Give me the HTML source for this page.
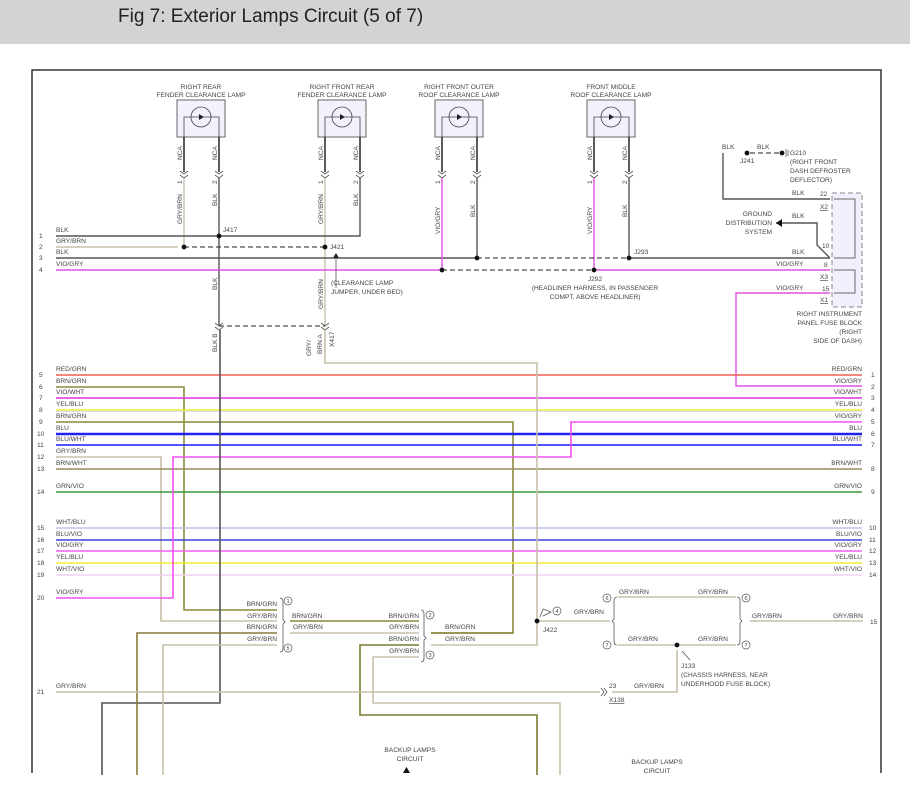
<!DOCTYPE html>
<html><head><meta charset="utf-8"><style>
html,body{margin:0;padding:0;background:#fff;width:910px;height:802px;overflow:hidden}
#hdr{position:absolute;left:0;top:0;width:910px;height:44px;background:#d3d3d3}
#hdr span{position:absolute;left:118px;top:6px;font:19px "Liberation Sans",sans-serif;color:#222}
svg{position:absolute;left:0;top:0}
text{font-family:"Liberation Sans",sans-serif;font-size:6.6px;fill:#444}
</style></head><body>
<div id="hdr"><span>Fig 7: Exterior Lamps Circuit (5 of 7)</span></div>
<svg width="910" height="802" viewBox="0 0 910 802">
<path d="M32 773V70H881V773" fill="none" stroke="#333" stroke-width="1.5"/>

<g fill="#f2f2fc" stroke="#666" stroke-width="1">
<rect x="177" y="100" width="48" height="37"/><rect x="318" y="100" width="48" height="37"/>
<rect x="435" y="100" width="48" height="37"/><rect x="587" y="100" width="48" height="37"/>
</g>
<g fill="none" stroke="#444" stroke-width="0.8">
<circle cx="201" cy="117" r="10"/><circle cx="342" cy="117" r="10"/><circle cx="459" cy="117" r="10"/><circle cx="611" cy="117" r="10"/>
<path d="M184 137V117H219V137M325 137V117H360V137M442 137V117H477V137M594 137V117H629V137"/>
</g>
<g fill="#222"><path d="M199 114l5 3-5 3zM340 114l5 3-5 3zM457 114l5 3-5 3zM609 114l5 3-5 3z"/></g>
<g text-anchor="middle">
<text x="201" y="89">RIGHT REAR</text><text x="201" y="97">FENDER CLEARANCE LAMP</text>
<text x="342" y="89">RIGHT FRONT REAR</text><text x="342" y="97">FENDER CLEARANCE LAMP</text>
<text x="459" y="89">RIGHT FRONT OUTER</text><text x="459" y="97">ROOF CLEARANCE LAMP</text>
<text x="611" y="89">FRONT MIDDLE</text><text x="611" y="97">ROOF CLEARANCE LAMP</text>
</g>
<g stroke="#333" stroke-width="1.6" fill="none">
<path d="M184 137V172M219 137V172M325 137V172M360 137V172M442 137V172M477 137V172M594 137V172M629 137V172"/>
</g>
<g stroke="#555" stroke-width="0.8" fill="none">
<path d="M180 171l4 3 4-3M180 175l4 3 4-3M215 171l4 3 4-3M215 175l4 3 4-3M321 171l4 3 4-3M321 175l4 3 4-3M356 171l4 3 4-3M356 175l4 3 4-3M438 171l4 3 4-3M438 175l4 3 4-3M473 171l4 3 4-3M473 175l4 3 4-3M590 171l4 3 4-3M590 175l4 3 4-3M625 171l4 3 4-3M625 175l4 3 4-3"/>
</g>
<g>
<text transform="translate(182,160) rotate(-90)">NCA</text><text transform="translate(217,160) rotate(-90)">NCA</text>
<text transform="translate(323,160) rotate(-90)">NCA</text><text transform="translate(358,160) rotate(-90)">NCA</text>
<text transform="translate(440,160) rotate(-90)">NCA</text><text transform="translate(475,160) rotate(-90)">NCA</text>
<text transform="translate(592,160) rotate(-90)">NCA</text><text transform="translate(627,160) rotate(-90)">NCA</text>
<text transform="translate(182,184) rotate(-90)">1</text><text transform="translate(217,184) rotate(-90)">2</text>
<text transform="translate(323,184) rotate(-90)">1</text><text transform="translate(358,184) rotate(-90)">2</text>
<text transform="translate(440,184) rotate(-90)">1</text><text transform="translate(475,184) rotate(-90)">2</text>
<text transform="translate(592,184) rotate(-90)">1</text><text transform="translate(627,184) rotate(-90)">2</text>
<text transform="translate(182,224) rotate(-90)">GRY/BRN</text><text transform="translate(217,206) rotate(-90)">BLK</text>
<text transform="translate(323,224) rotate(-90)">GRY/BRN</text><text transform="translate(358,206) rotate(-90)">BLK</text>
<text transform="translate(440,234) rotate(-90)">VIO/GRY</text><text transform="translate(475,217) rotate(-90)">BLK</text>
<text transform="translate(592,234) rotate(-90)">VIO/GRY</text><text transform="translate(627,217) rotate(-90)">BLK</text>
<text transform="translate(217,290) rotate(-90)">BLK</text><text transform="translate(323,309) rotate(-90)">GRY/BRN</text>
<text transform="translate(217,352) rotate(-90)">BLK B</text>
<text transform="translate(311,356) rotate(-90)">GRY/</text><text transform="translate(322,354) rotate(-90)">BRN  A</text>
<text transform="translate(334,347) rotate(-90)">X417</text>
</g>

<g fill="none" stroke-width="1.4">
<path d="M184 178V247M325 178V326M56 247H178" stroke="#c8c0a8"/>
<path d="M219 178V326M56 236H360V178M56 258H477V178M629 178V258H830M723 153V199H830" stroke="#555"/>
<path d="M442 178V270M594 178V270M56 270H442M594 270H830M830 293H736V386H862" stroke="#e050e0"/>
</g>
<g fill="none" stroke="#222" stroke-width="1.1" stroke-dasharray="5,3">
<path d="M184 247H325M477 258H629M442 270H594M219 326H325M750 153H782"/>
</g>
<g fill="#111"><circle cx="184" cy="247" r="2.4"/><circle cx="219" cy="236" r="2.4"/><circle cx="325" cy="247" r="2.4"/><circle cx="477" cy="258" r="2.4"/><circle cx="442" cy="270" r="2.4"/><circle cx="594" cy="270" r="2.4"/><circle cx="629" cy="258" r="2.4"/><circle cx="747" cy="153" r="2.4"/><circle cx="782" cy="153" r="2.4"/></g>
<g stroke="#555" stroke-width="0.8" fill="none">
<path d="M215 323l4 3 4-3M215 327l4 3 4-3M321 323l4 3 4-3M321 327l4 3 4-3M786 149V157M788 150V156"/>
<path d="M336 288V256" /></g>
<path d="M333 258l3-5 3 5z" fill="#222"/>
<text x="223" y="232">J417</text><text x="330" y="249">J421</text>
<text x="331" y="285">(CLEARANCE LAMP</text><text x="331" y="294">JUMPER, UNDER BED)</text>
<text x="634" y="254">J293</text>
<g text-anchor="middle"><text x="595" y="281">J292</text><text x="595" y="290">(HEADLINER HARNESS, IN PASSENGER</text><text x="595" y="299">COMPT, ABOVE HEADLINER)</text></g>

<text x="722" y="149">BLK</text><text x="757" y="149">BLK</text><text x="740" y="163">J241</text>
<text x="790" y="155">G210</text><text x="790" y="164">(RIGHT FRONT</text><text x="790" y="173">DASH DEFROSTER</text><text x="790" y="182">DEFLECTOR)</text>
<rect x="832" y="193" width="30" height="114" fill="#f0f0fc" stroke="#888" stroke-dasharray="5,3"/>
<path d="M834 199H855V258H834M834 270H855V293H834" fill="none" stroke="#666" stroke-width="1"/>
<path d="M776 223H817V245L830 258" fill="none" stroke="#555" stroke-width="1.4"/>
<path d="M776 223l6-4v8z" fill="#111"/>
<g text-anchor="end"><text x="772" y="216">GROUND</text><text x="772" y="225">DISTRIBUTION</text><text x="772" y="234">SYSTEM</text>
<text x="862" y="316">RIGHT INSTRUMENT</text><text x="862" y="325">PANEL FUSE BLOCK</text><text x="862" y="334">(RIGHT</text><text x="862" y="343">SIDE OF DASH)</text></g>
<text x="792" y="195">BLK</text><text x="820" y="196">22</text><text x="820" y="209" text-decoration="underline">X2</text>
<text x="792" y="218">BLK</text><text x="822" y="248">10</text><text x="792" y="254">BLK</text>
<text x="776" y="266">VIO/GRY</text><text x="824" y="267">8</text><text x="820" y="279" text-decoration="underline">X3</text>
<text x="776" y="290">VIO/GRY</text><text x="822" y="291">15</text><text x="820" y="302" text-decoration="underline">X1</text>

<g fill="none" stroke-width="1.6">
<path d="M56 375H862" stroke="#f06050"/>
<path d="M56 387H184V610H277" stroke="#8a8a3a"/>
<path d="M56 398H862" stroke="#e030e0"/>
<path d="M56 410H862" stroke="#eeee30"/><path d="M56 411.5H862" stroke="#c8c8f0" stroke-width="0.8"/>
<path d="M56 422H513V633H431" stroke="#8a8a3a"/>
<path d="M56 434H862" stroke="#2020f0" stroke-width="2.4"/>
<path d="M56 445H862" stroke="#1a1aff"/>
<path d="M56 457H161V621H277" stroke="#c8c0a8"/>
<path d="M56 469H862" stroke="#9a8a60"/>
<path d="M56 492H862" stroke="#3a9a3a"/>
<path d="M56 528H862" stroke="#c0c0ec"/>
<path d="M56 540H862" stroke="#4040e0"/>
<path d="M56 551H862" stroke="#f060f0"/>
<path d="M56 563H862" stroke="#eeee30"/>
<path d="M56 575H862" stroke="#f0d0f0"/>
<path d="M56 598H173V457H571V422H862" stroke="#f050f0"/>
<path d="M325 330V363H537V645H431" stroke="#c8c0a8"/>
<path d="M220 330V703H102V775" stroke="#555"/>
<path d="M277 633H137V775" stroke="#8a7a3a"/>
<path d="M277 645H163V775" stroke="#c8c0a8"/>
<path d="M290 621H419M431 633H513" stroke="#8a8a3a"/>
<path d="M290 633H419" stroke="#c8c0a8"/>
<path d="M419 645H360V715H537V775" stroke="#7a7a30"/>
<path d="M419 657H373V703H560V775" stroke="#c8c0a8"/>
<path d="M537 621H610M618 597H736M618 645H736M750 621H863M56 692H600M612 692H677V650" stroke="#c8c0a8"/>
</g>
<circle cx="537" cy="621" r="2.4" fill="#111"/><circle cx="677" cy="645" r="2.4" fill="#111"/>
<g fill="none" stroke="#555" stroke-width="0.8">
<path d="M280 598q3 0 3 4v18l2 2-2 2v24q0 4-3 4M421 610q3 0 3 4v22l2 2-2 2v18q0 4-3 4M617 597q-3 0-3 4v18l-2 2 2 2v18q0 4 3 4M737 597q3 0 3 4v18l2 2-2 2v18q0 4-3 4"/>
<path d="M540 617l3-8M543 609l8 3-8 4M690 660l-8-9M601 688l3 4-3 4M604 688l3 4-3 4"/>
</g>
<g fill="none" stroke="#555" stroke-width="0.7">
<circle cx="288" cy="601" r="4"/><circle cx="288" cy="648" r="4"/><circle cx="430" cy="615" r="4"/><circle cx="430" cy="655" r="4"/>
<circle cx="557" cy="611" r="4"/><circle cx="607" cy="598" r="4"/><circle cx="607" cy="645" r="4"/><circle cx="746" cy="598" r="4"/><circle cx="746" cy="645" r="4"/>
</g>
<g text-anchor="middle"><text x="288" y="603" style="font-size:5.5px">1</text><text x="288" y="650" style="font-size:5.5px">5</text><text x="430" y="617" style="font-size:5.5px">2</text><text x="430" y="657" style="font-size:5.5px">3</text><text x="557" y="613" style="font-size:5.5px">4</text><text x="607" y="600" style="font-size:5.5px">6</text><text x="607" y="647" style="font-size:5.5px">7</text><text x="746" y="600" style="font-size:5.5px">6</text><text x="746" y="647" style="font-size:5.5px">7</text></g>
<g text-anchor="end">
<text x="277" y="606">BRN/GRN</text><text x="277" y="618">GRY/BRN</text><text x="277" y="629">BRN/GRN</text><text x="277" y="641">GRY/BRN</text>
<text x="419" y="618">BRN/GRN</text><text x="419" y="629">GRY/BRN</text><text x="419" y="641">BRN/GRN</text><text x="419" y="653">GRY/BRN</text>
</g>
<text x="292" y="618">BRN/GRN</text><text x="293" y="629">GRY/BRN</text><text x="445" y="629">BRN/GRN</text><text x="445" y="641">GRY/BRN</text>
<text x="543" y="632">J422</text><text x="574" y="614">GRY/BRN</text>
<text x="619" y="594">GRY/BRN</text><text x="698" y="594">GRY/BRN</text><text x="628" y="641">GRY/BRN</text><text x="698" y="641">GRY/BRN</text>
<text x="752" y="618">GRY/BRN</text><text x="833" y="618">GRY/BRN</text><text x="870" y="624">15</text>
<text x="681" y="668">J133</text><text x="681" y="677">(CHASSIS HARNESS, NEAR</text><text x="681" y="686">UNDERHOOD FUSE BLOCK)</text>
<text x="609" y="688">23</text><text x="609" y="702" text-decoration="underline">X138</text><text x="634" y="688">GRY/BRN</text>
<text x="56" y="688">GRY/BRN</text><text x="37" y="694">21</text>
<g text-anchor="middle"><text x="410" y="752">BACKUP LAMPS</text><text x="410" y="761">CIRCUIT</text><text x="657" y="764">BACKUP LAMPS</text><text x="657" y="773">CIRCUIT</text></g>
<path d="M403 773l3.5-6 3.5 6z" fill="#111"/>

<text x="56" y="232">BLK</text><text x="56" y="243">GRY/BRN</text><text x="56" y="254">BLK</text><text x="56" y="266">VIO/GRY</text>
<text x="56" y="371">RED/GRN</text><text x="56" y="383">BRN/GRN</text><text x="56" y="394">VIO/WHT</text><text x="56" y="406">YEL/BLU</text>
<text x="56" y="418">BRN/GRN</text><text x="56" y="430">BLU</text><text x="56" y="441">BLU/WHT</text><text x="56" y="453">GRY/BRN</text>
<text x="56" y="465">BRN/WHT</text><text x="56" y="488">GRN/VIO</text><text x="56" y="524">WHT/BLU</text><text x="56" y="536">BLU/VIO</text>
<text x="56" y="547">VIO/GRY</text><text x="56" y="559">YEL/BLU</text><text x="56" y="571">WHT/VIO</text><text x="56" y="594">VIO/GRY</text>
<g>
<text x="39" y="238">1</text><text x="39" y="249">2</text><text x="39" y="260">3</text><text x="39" y="272">4</text>
<text x="39" y="377">5</text><text x="39" y="389">6</text><text x="39" y="400">7</text><text x="39" y="412">8</text><text x="39" y="424">9</text>
<text x="37" y="436">10</text><text x="37" y="447">11</text><text x="37" y="459">12</text><text x="37" y="471">13</text><text x="37" y="494">14</text>
<text x="37" y="530">15</text><text x="37" y="542">16</text><text x="37" y="553">17</text><text x="37" y="565">18</text><text x="37" y="577">19</text><text x="37" y="600">20</text>
</g>
<g text-anchor="end">
<text x="862" y="371">RED/GRN</text><text x="862" y="383">VIO/GRY</text><text x="862" y="394">VIO/WHT</text><text x="862" y="406">YEL/BLU</text>
<text x="862" y="418">VIO/GRY</text><text x="862" y="430">BLU</text><text x="862" y="441">BLU/WHT</text><text x="862" y="465">BRN/WHT</text>
<text x="862" y="488">GRN/VIO</text><text x="862" y="524">WHT/BLU</text><text x="862" y="536">BLU/VIO</text><text x="862" y="547">VIO/GRY</text>
<text x="862" y="559">YEL/BLU</text><text x="862" y="571">WHT/VIO</text>
</g>
<g>
<text x="871" y="377">1</text><text x="871" y="389">2</text><text x="871" y="400">3</text><text x="871" y="412">4</text><text x="871" y="424">5</text>
<text x="871" y="436">6</text><text x="871" y="447">7</text><text x="871" y="471">8</text><text x="871" y="494">9</text>
<text x="869" y="530">10</text><text x="869" y="542">11</text><text x="869" y="553">12</text><text x="869" y="565">13</text><text x="869" y="577">14</text>
</g>
</svg>
</body></html>
